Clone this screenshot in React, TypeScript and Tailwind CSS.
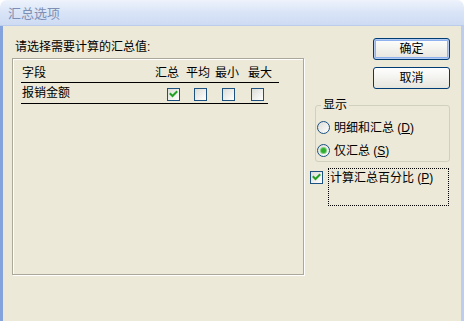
import type { ReactNode } from 'react';

const FONT = "font-['Liberation_Sans','Noto_Sans_CJK_SC',sans-serif]";

function XpCheck({ checked }: { checked?: boolean }) {
  return (
    <span className="w-[13px] h-[13px] shrink-0 border border-[#1c5180] bg-linear-to-br from-[#dcdcd7] to-white flex items-center justify-center">
      {checked && (
        <svg width="11" height="11" viewBox="0 0 11 11">
          <polyline points="2.5,5 4.5,7 8.5,3" fill="none" stroke="#21a121" strokeWidth="2" strokeLinecap="square" />
        </svg>
      )}
    </span>
  );
}

function XpRadio({ checked }: { checked?: boolean }) {
  return (
    <span className="w-[13px] h-[13px] shrink-0 rounded-full border border-[#1c5180] bg-linear-to-br from-[#dcdcd7] to-white flex items-center justify-center">
      {checked && <span className="w-[5px] h-[5px] rounded-full bg-[#2fae2f] shadow-[0_0_0_1px_#7fd07f]" />}
    </span>
  );
}

function XpButton({ children, primary }: { children: ReactNode; primary?: boolean }) {
  return (
    <button
      className={
        'w-[77px] h-[22px] rounded-[3px] border border-[#003c74] bg-linear-to-b from-white to-[#e6e5dd] text-[12px] leading-none text-black ' +
        (primary ? 'shadow-[inset_0_0_0_1px_#b4ccf3,inset_0_0_0_2px_#8fb2ee]' : '')
      }
    >
      {children}
    </button>
  );
}

export default function App() {
  return (
    <div className={`w-[464px] h-[321px] bg-white flex flex-col overflow-hidden ${FONT}`}>
      {/* title bar */}
      <div className="h-[26px] shrink-0 rounded-t-[7px] bg-linear-to-b from-[#eef3fc] via-[#d9e4f7] to-[#cddbf3] border-b border-[#bccdec] flex items-center pl-[8px]">
        <span className="text-[13px] text-[#7d8fb5] leading-none pt-[1px]">汇总选项</span>
      </div>

      <div className="flex-1 flex bg-[#ece9d8] border-l-[3px] border-l-[#84a3dd] border-r-[3px] border-r-[#bccdef] text-[12px] text-black">
        {/* left column */}
        <div className="pl-[9px] pt-[14px] flex flex-col">
          <div className="ml-[3px] leading-[14px]">请选择需要计算的汇总值:</div>
          <div className="mt-[4px] w-[292px] h-[217px] border border-[#aca899] shadow-[1px_1px_0_white,inset_1px_1px_0_white]">
            <div className="ml-[8px] w-[258px] h-[24px] border-b border-black flex pt-[6px] leading-[16px]">
              <span className="w-[134px] pl-[1px]">字段</span>
              <span className="w-[31px]">汇总</span>
              <span className="w-[29px]">平均</span>
              <span className="w-[33px]">最小</span>
              <span>最大</span>
            </div>
            <div className="ml-[8px] w-[247px] h-[21px] border-b border-black flex items-end pb-[2px] leading-[16px]">
              <span className="w-[146px] pl-[1px]">报销金额</span>
              <XpCheck checked />
              <span className="w-[14px]" />
              <XpCheck />
              <span className="w-[15px]" />
              <XpCheck />
              <span className="w-[16px]" />
              <XpCheck />
            </div>
          </div>
        </div>

        {/* right column */}
        <div className="ml-[11px] w-[135px] pt-[12px] flex flex-col">
          <div className="ml-[58px] flex flex-col gap-[7px]">
            <XpButton primary>确定</XpButton>
            <XpButton>取消</XpButton>
          </div>

          <fieldset className="mt-[9px] border border-[#d0d0bf] rounded-[3px] pl-[1px] pt-[9px] pb-[4px] flex flex-col gap-[10px]">
            <legend className="ml-[4px] px-[2px] leading-[14px]">显示</legend>
            <div className="h-[13px] flex items-center gap-[4px]">
              <XpRadio />
              <span className="leading-[14px]">
                明细和汇总 (<u>D</u>)
              </span>
            </div>
            <div className="h-[13px] flex items-center gap-[4px]">
              <XpRadio checked />
              <span className="leading-[14px]">
                仅汇总 (<u>S</u>)
              </span>
            </div>
          </fieldset>

          <div className="ml-[-5px] mt-[6px] flex items-start gap-[5px]">
            <span className="mt-[3px]">
              <XpCheck checked />
            </span>
            <div className="w-[121px] h-[38px] border border-dotted border-black pl-[1px] pt-[1px] leading-[16px]">
              计算汇总百分比 (<u>P</u>)
            </div>
          </div>
        </div>
      </div>
    </div>
  );
}
